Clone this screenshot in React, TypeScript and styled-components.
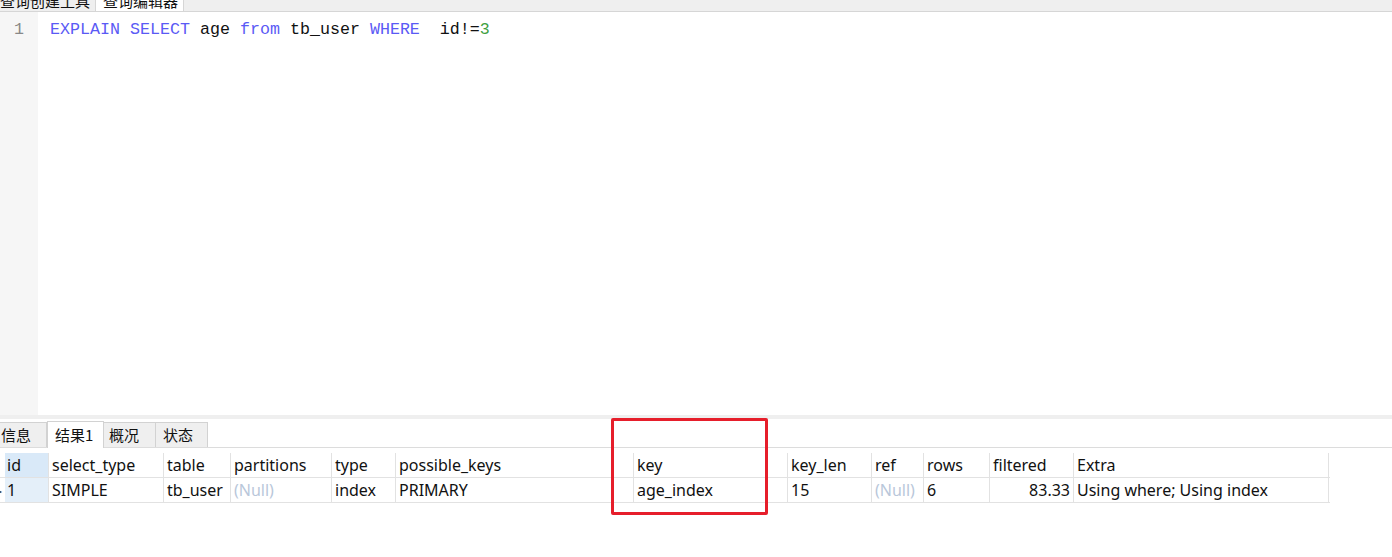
import React from "react";
import styled, { createGlobalStyle } from "styled-components";

const Global = createGlobalStyle`
  html, body { margin: 0; padding: 0; background: #ffffff; }
  body { font-family: "Noto Sans", "Noto Sans CJK SC", sans-serif; }
  * { box-sizing: border-box; }
`;

const Page = styled.div`
  position: relative;
  width: 1392px;
  height: 557px;
  overflow: hidden;
  display: flex;
  flex-direction: column;
  background: #fff;
`;

const TopTabs = styled.div`
  height: 12px;
  flex: none;
  display: flex;
  background: #efefef;
  border-bottom: 1px solid #d6d6d6;
  overflow: hidden;
`;

const TopTab = styled.div<{ $active?: boolean; $w: number }>`
  width: ${(p) => p.$w}px;
  flex: none;
  background: ${(p) => (p.$active ? "#ffffff" : "#efefef")};
  border-right: 1px solid #d6d6d6;
  font-family: "Noto Sans CJK SC", sans-serif;
  font-size: 15px;
  line-height: 20px;
  margin-top: -9px;
  height: 21px;
  padding-left: ${(p) => (p.$active ? 7 : 0)}px;
  color: #111;
  white-space: nowrap;
`;

const Editor = styled.div`
  height: 403px;
  flex: none;
  display: flex;
`;

const Gutter = styled.div`
  width: 38px;
  flex: none;
  background: #f6f6f6;
  padding-top: 8px;
  padding-left: 14px;
  font-family: "Liberation Mono", monospace;
  font-size: 16.67px;
  line-height: 20px;
  color: #888;
`;

const Code = styled.div`
  flex: 1;
  padding-top: 8px;
  padding-left: 12px;
  font-family: "Liberation Mono", monospace;
  font-size: 16.67px;
  line-height: 20px;
  color: #111;
  white-space: pre;
`;

const Kw = styled.span`
  color: #5a5af5;
`;

const Num = styled.span`
  color: #3fa03f;
`;

const Splitter = styled.div`
  height: 4px;
  flex: none;
  background: #efefef;
`;

const ResultTabs = styled.div`
  height: 29px;
  flex: none;
  display: flex;
  align-items: flex-end;
  border-bottom: 1px solid #dcdcdc;
  padding-top: 1px;
`;

const ResultTab = styled.div<{ $active?: boolean; $w: number; $pl: number }>`
  width: ${(p) => p.$w}px;
  flex: none;
  height: ${(p) => (p.$active ? 27 : 25)}px;
  background: ${(p) => (p.$active ? "#ffffff" : "#efefef")};
  border: 1px solid #d2d2d2;
  border-left: ${(p) => (p.$active ? "1px solid #d2d2d2" : "none")};
  border-bottom: none;
  margin-bottom: ${(p) => (p.$active ? -1 : 0)}px;
  font-family: "Noto Sans CJK SC", sans-serif;
  font-size: 15px;
  line-height: 22px;
  padding-top: ${(p) => (p.$active ? 2 : 1)}px;
  padding-left: ${(p) => p.$pl}px;
  color: #111;
  position: relative;
`;

const Grid = styled.div`
  margin-top: 5px;
  display: flex;
  flex-direction: column;
  width: 1330px;
`;

const Row = styled.div`
  display: flex;
  height: 25px;
  border-bottom: 1px solid #e2e2e2;
`;

const Marker = styled.div`
  width: 5px;
  flex: none;
  font-size: 8px;
  line-height: 25px;
  color: #333;
  overflow: hidden;
  text-indent: -2px;
`;

const Cell = styled.div<{ $w: number; $sel?: boolean; $head?: boolean; $right?: boolean; $null?: boolean }>`
  width: ${(p) => p.$w}px;
  flex: none;
  border-right: 1px solid #e2e2e2;
  background: ${(p) => (p.$sel ? (p.$head ? "#d9e9f8" : "#e4eff9") : "#fff")};
  font-family: "Noto Sans", "Noto Sans CJK SC", sans-serif;
  font-size: 16px;
  line-height: 24px;
  padding: 0 3px 0 ${(p) => (p.$sel ? 2 : 3)}px;
  color: ${(p) => (p.$null ? "#b9c7da" : "#111")};
  text-align: ${(p) => (p.$right ? "right" : "left")};
  white-space: nowrap;
  overflow: hidden;
`;

const Highlight = styled.div`
  position: absolute;
  left: 611px;
  top: 418px;
  width: 157px;
  height: 97px;
  border: 3px solid #e61e2b;
  border-radius: 2px;
  pointer-events: none;
`;

type Col = { name: string; w: number; value: string; null?: boolean; right?: boolean };

const cols: Col[] = [
  { name: "id", w: 44, value: "1" },
  { name: "select_type", w: 115, value: "SIMPLE" },
  { name: "table", w: 67, value: "tb_user" },
  { name: "partitions", w: 101, value: "(Null)", null: true },
  { name: "type", w: 64, value: "index" },
  { name: "possible_keys", w: 238, value: "PRIMARY" },
  { name: "key", w: 154, value: "age_index" },
  { name: "key_len", w: 84, value: "15" },
  { name: "ref", w: 52, value: "(Null)", null: true },
  { name: "rows", w: 66, value: "6" },
  { name: "filtered", w: 84, value: "83.33", right: true },
  { name: "Extra", w: 255, value: "Using where; Using index" },
];

const resultTabs = [
  { label: "信息", w: 47, pl: 1 },
  { label: "结果1", w: 57, pl: 7, active: true },
  { label: "概况", w: 52, pl: 5 },
  { label: "状态", w: 52, pl: 7 },
];

export default function App() {
  return (
    <Page>
      <Global />
      <TopTabs>
        <TopTab $w={96}>查询创建工具</TopTab>
        <TopTab $w={88} $active>
          查询编辑器
        </TopTab>
      </TopTabs>
      <Editor>
        <Gutter>1</Gutter>
        <Code>
          <Kw>EXPLAIN</Kw> <Kw>SELECT</Kw> age <Kw>from</Kw> tb_user <Kw>WHERE</Kw>  id!=<Num>3</Num>
        </Code>
      </Editor>
      <Splitter />
      <ResultTabs>
        {resultTabs.map((t) => (
          <ResultTab key={t.label} $w={t.w} $pl={t.pl} $active={t.active}>
            {t.label}
          </ResultTab>
        ))}
      </ResultTabs>
      <Grid>
        <Row>
          <Marker />
          {cols.map((c, i) => (
            <Cell key={c.name} $w={c.w} $head $sel={i === 0}>
              {c.name}
            </Cell>
          ))}
        </Row>
        <Row>
          <Marker>▸</Marker>
          {cols.map((c, i) => (
            <Cell key={c.name} $w={c.w} $sel={i === 0} $null={c.null} $right={c.right}>
              {c.value}
            </Cell>
          ))}
        </Row>
      </Grid>
      <Highlight />
    </Page>
  );
}
